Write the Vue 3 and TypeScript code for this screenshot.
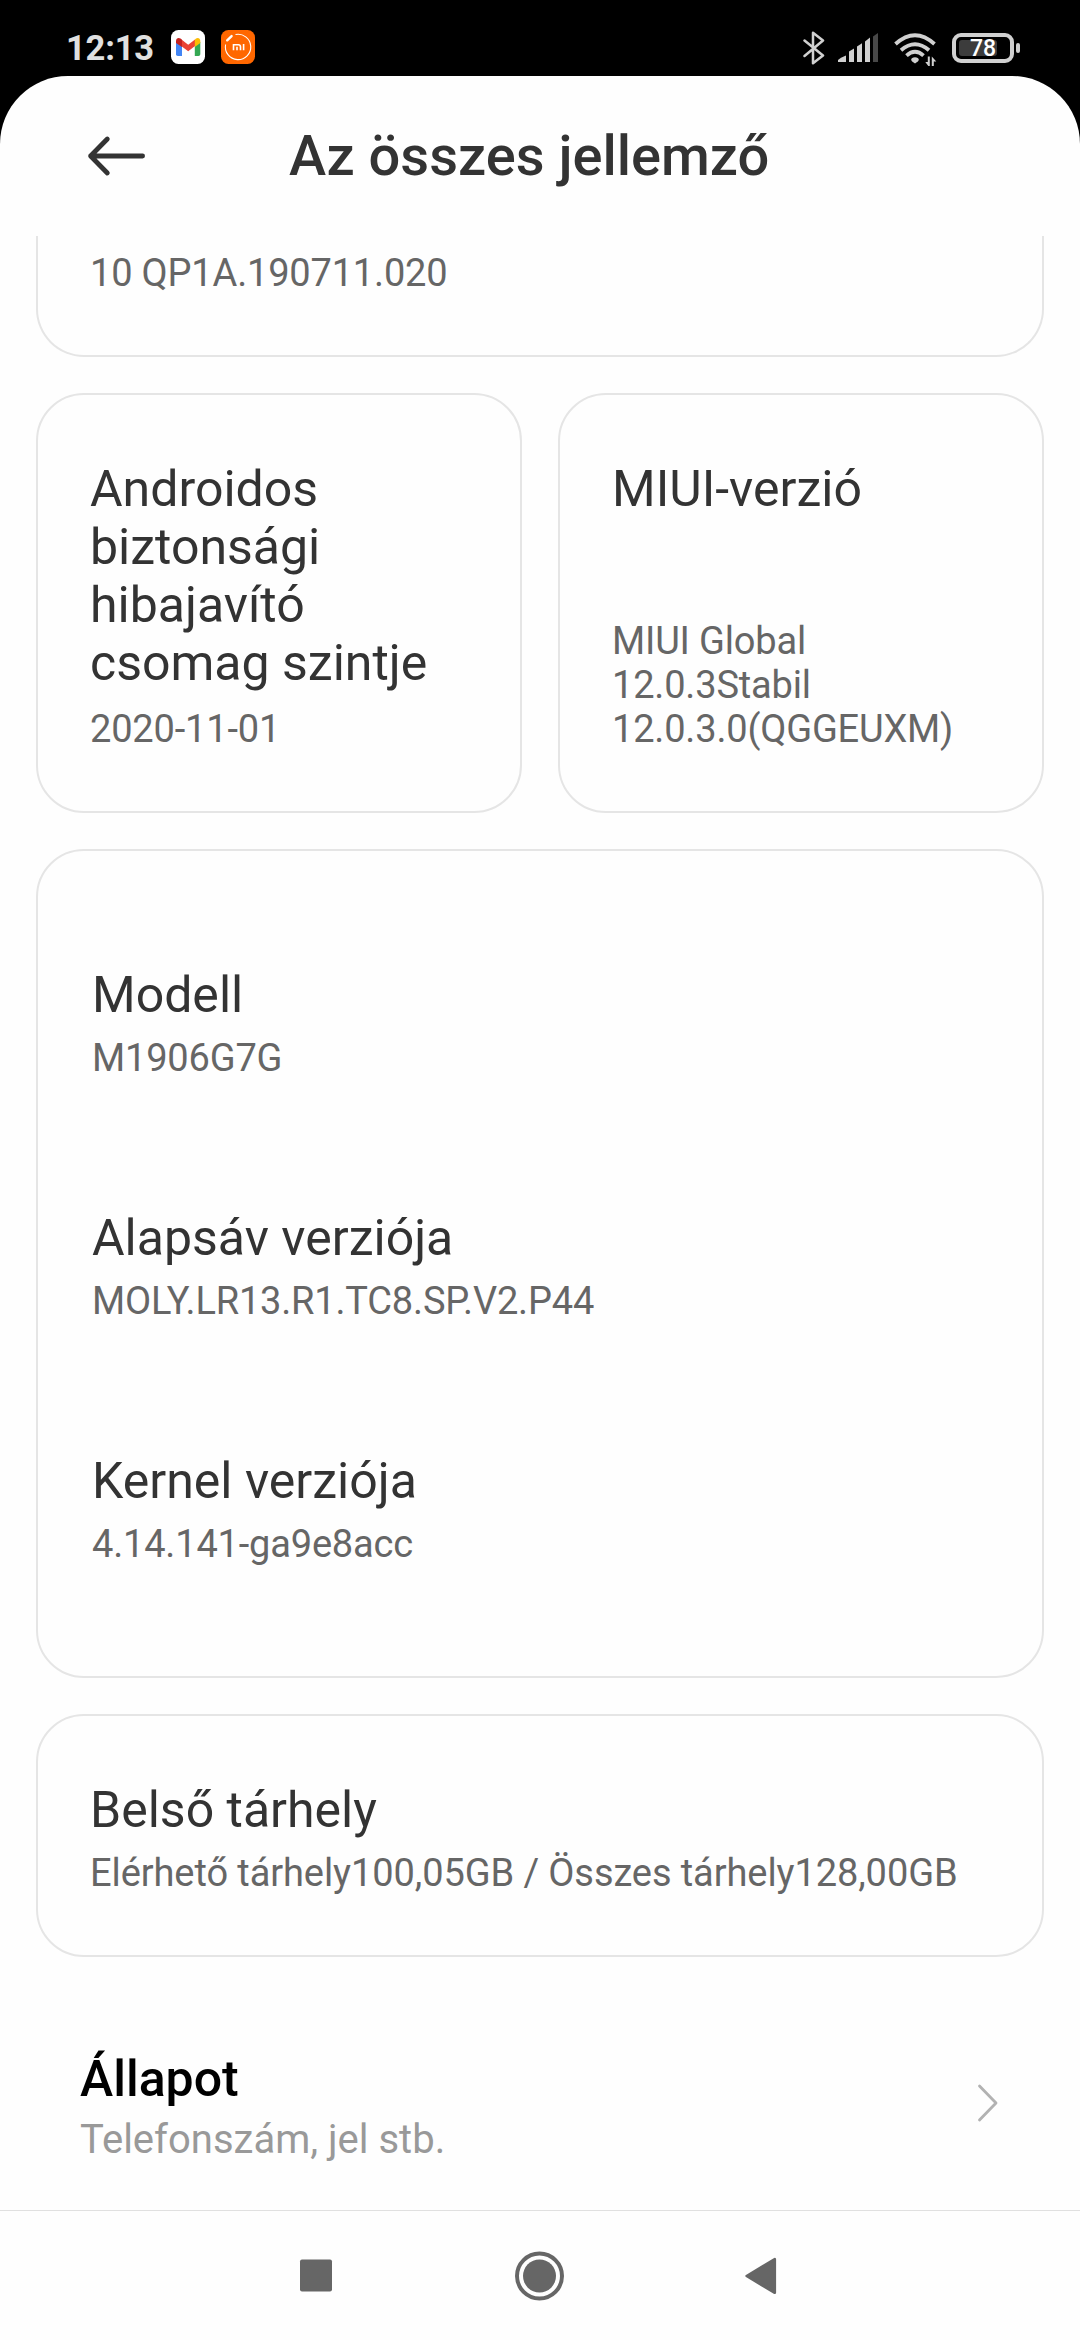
<script setup lang="ts">
interface Spec {
  title: string
  value: string
}

const hardware: Spec[] = [
  { title: 'Modell', value: 'M1906G7G' },
  { title: 'Alapsáv verziója', value: 'MOLY.LR13.R1.TC8.SP.V2.P44' },
  { title: 'Kernel verziója', value: '4.14.141-ga9e8acc' },
]

const miuiLines: string[] = ['MIUI Global', '12.0.3Stabil', '12.0.3.0(QGGEUXM)']
</script>

<template>
  <div class="screen">
    <div class="status-bar">
      <span class="clock">12:13</span>
      <svg class="app-icon gmail" viewBox="0 0 34 34">
        <rect width="34" height="34" rx="7.5" fill="#fff" />
        <path d="M5 12v12.2a1.8 1.8 0 0 0 1.8 1.8H11V15z" fill="#4285f4" />
        <path d="M29.300 12v12.2a1.8 1.8 0 0 1-1.8 1.8H23.800V15z" fill="#34a853" />
        <path d="M10.500 9.500l6.700 5.200 6.800-5.200V16l-6.800 5.200L10.500 16.200z" fill="#ea4335" />
        <path d="M5 13v-2.200c0-2.500 2.500-3.600 4.500-2.200L11 9.800V17z" fill="#c5221f" />
        <path d="M29.300 13v-2.200c0-2.500-2.500-3.600-4.300-2.200L23.800 9.800V17z" fill="#fbbc04" />
      </svg>
      <svg class="app-icon mi" viewBox="0 0 34 34" fill="none" stroke="#fff">
        <rect width="34" height="34" rx="7.500" fill="#ff6700" stroke="none" />
        <path d="M14.500 4.500A12.700 12.700 0 1 1 4.600 14.500" stroke-width="1.100" />
        <path d="M6.200 10.300L10.600 6.100" stroke-width="2.400" stroke-linecap="round" />
        <path d="M12.500 20.300v-5.500h4.800q2.200 0 2.200 2.200v3.300M16 16.800v3.500M22.600 14.100v6.200" stroke-width="1.600" />
      </svg>
      <span class="spacer"></span>
      <svg class="bluetooth" viewBox="0 0 22 34" fill="none" stroke="#d0d0d0" stroke-width="2.500">
        <path d="M1.500 9.500L20 24.500 10 32.300V1.700L20 9.500 1.500 25" stroke-linejoin="round" stroke-linecap="round" />
      </svg>
      <svg class="signal" viewBox="0 0 40 30" fill="#d0d0d0">
        <path d="M0 29v-2l3-2.300L8 22.500V29z" />
        <path d="M11 29V18.500l5-3V29z" />
        <path d="M19 29V13.500l5-3.300V29z" />
        <path d="M27 29V8.500l5-4V29z" />
        <path d="M35 29V3.500L40 0v29z" fill="#484848" />
      </svg>
      <svg class="wifi" viewBox="0 0 43 34" fill="none" stroke="#d0d0d0" stroke-width="3.800">
        <path d="M1.500 11Q21-6.600 40.500 11" />
        <path d="M7 17.300Q21 5.300 35 17.300" />
        <path d="M12.500 22.600Q21 14.800 29.500 22.600" />
        <path d="M21 24.200c2.300 0 3.800 1 3.800 2.500 0 1.200-2 2.600-3.800 3.800-1.800-1.200-3.800-2.600-3.800-3.800 0-1.500 1.500-2.500 3.800-2.500z" fill="#d0d0d0" stroke="none" />
        <path d="M35.800 23.500v9.500h-1.500l-3-4h2.500v-5.500zM37.800 33V23.500l4.500 5h-2.500V33z" fill="#d0d0d0" stroke="none" />
      </svg>
      <div class="battery">
        <div class="battery-body">
          <div class="battery-level"></div>
          <span class="battery-text">78</span>
        </div>
        <div class="battery-tip"></div>
      </div>
    </div>

    <div class="panel">
      <header class="header">
        <svg class="back" viewBox="0 0 60 42" fill="none" stroke="#333" stroke-width="4.800" stroke-linecap="round" stroke-linejoin="round">
          <path d="M56.600 21H4.600M21.300 4L4.600 21l16.700 17" />
        </svg>
        <h1 class="heading">Az összes jellemző</h1>
      </header>

      <main class="content">
        <section class="card cut">
          <p class="value">10 QP1A.190711.020</p>
        </section>

        <div class="pair">
          <section class="card tile">
            <h2 class="title">Androidos biztonsági hibajavító csomag szintje</h2>
            <p class="value">2020-11-01</p>
          </section>
          <section class="card tile">
            <h2 class="title">MIUI-verzió</h2>
            <p class="value"><span v-for="line in miuiLines" :key="line" class="line">{{ line }}</span></p>
          </section>
        </div>

        <section class="card list">
          <div v-for="item in hardware" :key="item.title" class="spec">
            <h2 class="title">{{ item.title }}</h2>
            <p class="value">{{ item.value }}</p>
          </div>
        </section>

        <section class="card storage">
          <div class="spec">
            <h2 class="title">Belső tárhely</h2>
            <p class="value">Elérhető tárhely100,05GB / Összes tárhely128,00GB</p>
          </div>
        </section>

        <div class="row">
          <div class="row-text">
            <h2 class="row-title">Állapot</h2>
            <p class="row-sub">Telefonszám, jel stb.</p>
          </div>
          <svg class="chevron" viewBox="0 0 22 40" fill="none" stroke="#b2b2b2" stroke-width="2.800" stroke-linecap="round" stroke-linejoin="round">
            <path d="M2.500 3L19 20 2.500 37" />
          </svg>
        </div>
      </main>
    </div>

    <nav class="nav">
      <svg class="nav-icon" viewBox="0 0 50 50"><rect x="9" y="8.500" width="32" height="32" rx="2" fill="#666" /></svg>
      <svg class="nav-icon" viewBox="0 0 50 50">
        <circle cx="24.500" cy="25" r="22.500" fill="none" stroke="#666" stroke-width="4" />
        <circle cx="24.500" cy="25" r="16.500" fill="#666" />
      </svg>
      <svg class="nav-icon" viewBox="0 0 50 50">
        <path d="M35.800 8.200v33.600L7.600 25z" fill="#666" stroke="#666" stroke-width="2.600" stroke-linejoin="round" />
      </svg>
    </nav>
  </div>
</template>

<style>
body {
  background: #000;
}
</style>

<style scoped>
.screen {
  width: 1080px;
  height: 2340px;
  display: flex;
  flex-direction: column;
  overflow: hidden;
  background: #000;
  font-family: Roboto, sans-serif;
}
h1, h2, p {
  margin: 0;
  font-weight: 400;
}
svg {
  display: block;
  flex: none;
}
.status-bar {
  height: 76px;
  flex: none;
  box-sizing: border-box;
  display: flex;
  align-items: flex-start;
  padding: 30px 60px 0 66px;
}
.clock {
  width: 105px;
  line-height: 36px;
  font-size: 34.5px;
  font-weight: 700;
  letter-spacing: -0.2px;
  color: #e0e0e0;
}
.app-icon {
  width: 34px;
  height: 34px;
}
.mi {
  margin-left: 16px;
}
.spacer {
  flex: 1;
}
.bluetooth {
  width: 22px;
  height: 34px;
  margin-top: 1px;
}
.signal {
  width: 40px;
  height: 30px;
  margin: 3px 0 0 13px;
}
.wifi {
  width: 43px;
  height: 34px;
  margin: 3px 0 0 16px;
}
.battery {
  display: flex;
  align-items: center;
  gap: 2px;
  margin: 3px 0 0 15px;
}
.battery-body {
  position: relative;
  width: 62px;
  height: 30px;
  box-sizing: border-box;
  border: 4px solid #d0d0d0;
  border-radius: 9px;
  padding: 3px;
}
.battery-level {
  width: 38px;
  height: 16px;
  border-radius: 3px;
  background: #3c3c3c;
}
.battery-text {
  position: absolute;
  inset: 0;
  text-align: center;
  line-height: 24px;
  font-size: 23px;
  font-weight: 500;
  color: #fff;
}
.battery-tip {
  width: 4px;
  height: 10px;
  border-radius: 2px;
  background: #d0d0d0;
}
.panel {
  flex: 1;
  min-height: 0;
  display: flex;
  flex-direction: column;
  background: #fefefe;
  border-radius: 68px 68px 0 0;
}
.header {
  height: 160px;
  flex: none;
  display: flex;
  align-items: center;
  padding-left: 86px;
}
.back {
  width: 60px;
  height: 42px;
}
.heading {
  margin-left: 143px;
  line-height: 64px;
  font-size: 56px;
  font-weight: 500;
  color: #333;
}
.content {
  flex: 1;
  min-height: 0;
  overflow: hidden;
  display: flex;
  flex-direction: column;
  padding: 0 36px;
}
.card {
  box-sizing: border-box;
  flex: none;
  border: 2px solid #e5e5e5;
  border-radius: 48px;
  padding: 65px 52px 60px;
  margin-bottom: 36px;
}
.cut {
  border-top: 0;
  border-radius: 0 0 48px 48px;
  padding-top: 15px;
}
.title {
  font-size: 50px;
  line-height: 58px;
  color: #333;
}
.value {
  font-size: 38px;
  line-height: 44px;
  letter-spacing: -0.18px;
  color: #666;
}
.storage .value {
  letter-spacing: -0.09px;
}
.line {
  display: block;
}
.pair {
  display: flex;
  gap: 36px;
}
.tile {
  flex: 1 1 0;
  height: 420px;
  display: flex;
  flex-direction: column;
  justify-content: space-between;
}
.list {
  display: flex;
  flex-direction: column;
  gap: 129px;
  padding: 115px 54px 110px;
}
.spec {
  display: flex;
  flex-direction: column;
  gap: 12px;
}
.row {
  display: flex;
  align-items: center;
  justify-content: space-between;
  padding: 57px 45px 0 44px;
}
.row-title {
  font-size: 50px;
  line-height: 58px;
  font-weight: 500;
  color: #000;
}
.row-sub {
  margin-top: 9px;
  font-size: 40px;
  line-height: 46px;
  color: #999;
}
.chevron {
  width: 22px;
  height: 40px;
  margin-top: -7px;
}
.nav {
  height: 130px;
  flex: none;
  box-sizing: border-box;
  border-top: 1px solid #e0e0e0;
  background: #fefefe;
  display: flex;
  align-items: center;
  justify-content: center;
  gap: 174px;
}
.nav-icon {
  width: 50px;
  height: 50px;
}
</style>
